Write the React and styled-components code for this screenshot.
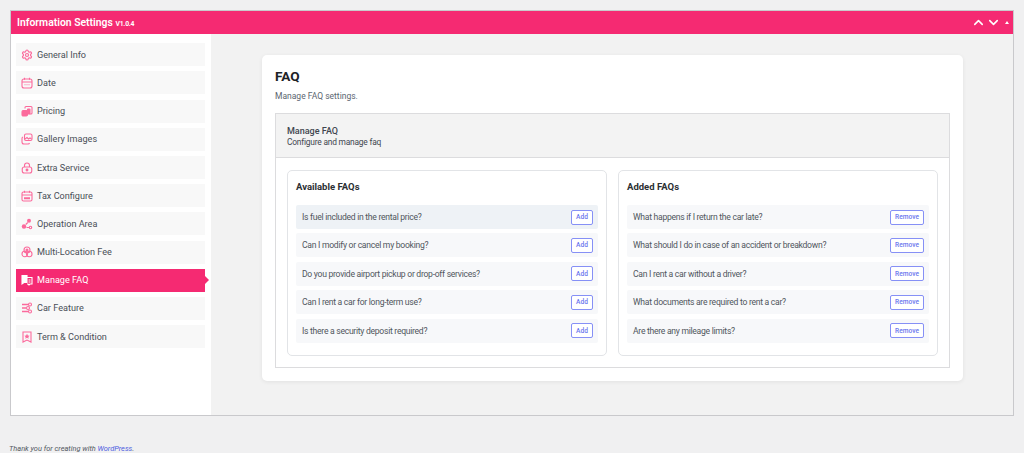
import React from "react";
import styled, { createGlobalStyle } from "styled-components";
import { Settings, ChevronUp, ChevronDown } from "lucide-react";

const GlobalStyle = createGlobalStyle`
  html, body {
    margin: 0;
    padding: 0;
    height: 453px;
    overflow: hidden;
    background: #f0f0f1;
    font-family: Roboto, "Noto Sans", "Liberation Sans", sans-serif;
  }
`;

const PINK = "#f52a72";

const Glyph = styled.svg.attrs({ viewBox: "0 0 24 24", fill: "none", stroke: "currentColor", strokeWidth: 2.2 })`
  width: 12px;
  height: 12px;
`;

const DateIcon = () => (
  <Glyph>
    <rect x="2" y="4" width="20" height="18" rx="4" />
    <path d="M7 1.5v4M17 1.5v4M2 10h20" />
    <path d="M7 15.5h10" strokeDasharray="2 2" />
  </Glyph>
);

const PricingIcon = () => (
  <Glyph>
    <rect x="2" y="11" width="11" height="11" rx="2.5" fill="currentColor" />
    <path d="M8 7V5a2 2 0 0 1 2-2h10a2 2 0 0 1 2 2v11a2 2 0 0 1-2 2h-3" />
    <rect x="13" y="8" width="5" height="10" rx="1" fill="currentColor" />
  </Glyph>
);

const GalleryIcon = () => (
  <Glyph>
    <rect x="7" y="2" width="15" height="13" rx="3" />
    <path d="M4 8a3 3 0 0 0-2 3v7a4 4 0 0 0 4 4h8a3 3 0 0 0 3-2" />
    <path d="M8 12l4-3 3 3 3-2 3 2" />
  </Glyph>
);

const ExtraIcon = () => (
  <Glyph>
    <path d="M7 10V7a5 5 0 0 1 10 0v3" />
    <rect x="2.5" y="10" width="19" height="12" rx="4" />
    <circle cx="12" cy="16" r="1.8" fill="currentColor" />
  </Glyph>
);

const TaxIcon = () => (
  <Glyph>
    <rect x="2" y="4" width="20" height="18" rx="3" />
    <path d="M7 1.5v4M17 1.5v4M2 10h20" />
    <path d="M6 16.5h12" strokeWidth="4" />
  </Glyph>
);

const AreaIcon = () => (
  <Glyph>
    <circle cx="16" cy="5.5" r="4" fill="currentColor" stroke="none" />
    <circle cx="6" cy="17" r="4.5" fill="currentColor" stroke="none" />
    <circle cx="19" cy="19" r="2.4" />
    <path d="M13.5 9l-4 4M11 19h5" />
  </Glyph>
);

const LocationIcon = () => (
  <Glyph>
    <circle cx="12" cy="8" r="6" />
    <circle cx="12" cy="8" r="2" fill="currentColor" />
    <circle cx="7.5" cy="16" r="5.5" />
    <circle cx="16.5" cy="16" r="5.5" />
  </Glyph>
);

const FaqIcon = () => (
  <Glyph>
    <path d="M2 3h10v14H6l-4 3z" fill="currentColor" />
    <path d="M12 7h10v13h-4l-2 2-2-2h-2" />
    <path d="M15 12h4M15 16h4" />
  </Glyph>
);

const FeatureIcon = () => (
  <Glyph>
    <path d="M2 5h12M2 12h8M2 19h12" strokeWidth="3" />
    <circle cx="18" cy="5" r="3" />
    <circle cx="14" cy="12" r="3" />
    <circle cx="18" cy="19" r="3" />
  </Glyph>
);

const TermIcon = () => (
  <Glyph>
    <path d="M4 2h16v20l-8-4-8 4z" />
    <path d="M12 5.5l1.7 3.3 3.6.5-2.6 2.5.6 3.6-3.3-1.7-3.3 1.7.6-3.6-2.6-2.5 3.6-.5z" fill="currentColor" stroke="none" />
  </Glyph>
);

const GeneralIcon = () => <Settings size={12} strokeWidth={2.4} />;

const menu = [
  { label: "General Info", Icon: GeneralIcon },
  { label: "Date", Icon: DateIcon },
  { label: "Pricing", Icon: PricingIcon },
  { label: "Gallery Images", Icon: GalleryIcon },
  { label: "Extra Service", Icon: ExtraIcon },
  { label: "Tax Configure", Icon: TaxIcon },
  { label: "Operation Area", Icon: AreaIcon },
  { label: "Multi-Location Fee", Icon: LocationIcon },
  { label: "Manage FAQ", Icon: FaqIcon, active: true },
  { label: "Car Feature", Icon: FeatureIcon },
  { label: "Term & Condition", Icon: TermIcon },
];

const available = [
  "Is fuel included in the rental price?",
  "Can I modify or cancel my booking?",
  "Do you provide airport pickup or drop-off services?",
  "Can I rent a car for long-term use?",
  "Is there a security deposit required?",
];

const added = [
  "What happens if I return the car late?",
  "What should I do in case of an accident or breakdown?",
  "Can I rent a car without a driver?",
  "What documents are required to rent a car?",
  "Are there any mileage limits?",
];

const Page = styled.div`
  padding: 10px 10px 0;
  width: 1024px;
  box-sizing: border-box;
`;

const Frame = styled.div`
  border: 1px solid #c9c9cc;
  height: 406px;
  box-sizing: border-box;
  display: flex;
  flex-direction: column;
  background: #f2f2f2;
`;

const TopBar = styled.div`
  height: 23px;
  flex: none;
  background: ${PINK};
  color: #fff;
  display: flex;
  align-items: center;
  justify-content: space-between;
  padding: 0 4px 0 6px;
`;

const AppTitle = styled.div`
  font-size: 10.4px;
  font-weight: 600;
  small {
    font-size: 6.8px;
    font-weight: 700;
    letter-spacing: -0.2px;
  }
`;

const TopActions = styled.div`
  display: flex;
  align-items: center;
`;

const Caret = styled.span`
  width: 0;
  height: 0;
  margin: 0 0 1px 4px;
  border-left: 2.5px solid transparent;
  border-right: 2.5px solid transparent;
  border-bottom: 3px solid #fff;
`;

const Body = styled.div`
  flex: 1;
  display: flex;
  min-height: 0;
`;

const Sidebar = styled.nav`
  width: 200px;
  flex: none;
  background: #fff;
  padding: 9.3px 6px 0 5px;
  box-sizing: border-box;
  display: flex;
  flex-direction: column;
  gap: 5.2px;
`;

const MenuItem = styled.div`
  position: relative;
  height: 23px;
  display: flex;
  align-items: center;
  gap: 4px;
  padding-left: 5px;
  font-size: 9.1px;
  background: ${(p) => (p.$active ? PINK : "#f8f8f8")};
  color: ${(p) => (p.$active ? "#fff" : "#4a4f57")};

  svg {
    color: ${(p) => (p.$active ? "#fff" : "#fb6a9c")};
    flex: none;
  }

  ${(p) =>
    p.$active &&
    `&::after {
      content: "";
      position: absolute;
      right: -4px;
      top: 7px;
      border-left: 4px solid ${PINK};
      border-top: 4px solid transparent;
      border-bottom: 4px solid transparent;
    }`}
`;

const Main = styled.main`
  flex: 1;
  padding: 21px 50px 0 51px;
  min-width: 0;
`;

const Card = styled.section`
  background: #fff;
  border-radius: 5px;
  box-shadow: 0 1px 4px rgba(0, 0, 0, 0.07);
  height: 326px;
  box-sizing: border-box;
  padding: 13px 13px 0;
`;

const Heading = styled.h1`
  margin: 0;
  font-size: 13.6px;
  line-height: 17px;
  font-weight: 700;
  color: #1d2327;
`;

const Subheading = styled.p`
  margin: 4px 0 10px;
  font-size: 8.5px;
  line-height: 14px;
  color: #5c6670;
`;

const Panel = styled.div`
  border: 1px solid #dcdcde;
  height: 255px;
  box-sizing: border-box;
`;

const PanelHead = styled.div`
  height: 44px;
  box-sizing: border-box;
  background: #f3f3f3;
  border-bottom: 1px solid #dcdcde;
  padding: 12px 11px 0;
  color: #3f4650;
  font-size: 8.4px;
  letter-spacing: -0.2px;
  line-height: 11px;

  strong {
    display: block;
    font-weight: 500;
    font-size: 9px;
    letter-spacing: 0;
  }
`;

const Columns = styled.div`
  display: grid;
  grid-template-columns: 320px 320px;
  gap: 11px;
  padding: 12px 11px 0;
`;

const ListCard = styled.div`
  height: 186px;
  box-sizing: border-box;
  border: 1px solid #e2e4e7;
  border-radius: 5px;
  padding: 10px 8px 0;
`;

const ListTitle = styled.h2`
  margin: 0 0 12px;
  font-size: 9.5px;
  line-height: 12px;
  font-weight: 700;
  color: #2b2f33;
`;

const Rows = styled.div`
  display: flex;
  flex-direction: column;
  gap: 4.4px;
`;

const Row = styled.div`
  height: 24px;
  display: flex;
  align-items: center;
  justify-content: space-between;
  padding: 0 5px 0 6px;
  border-radius: 2px;
  background: ${(p) => (p.$hover ? "#eef2f6" : "#f7f8fa")};
  font-size: 8.6px;
  letter-spacing: -0.28px;
  color: #50565d;
`;

const RowButton = styled.button`
  height: 15px;
  padding: 0 4px;
  min-width: 22px;
  box-sizing: border-box;
  border: 1px solid #8690f6;
  border-radius: 2px;
  background: #fff;
  color: #6b76ee;
  font: 500 6.6px Roboto, "Noto Sans", sans-serif;
  letter-spacing: 0;
`;

const Footer = styled.p`
  margin: 27px 0 0 -1px;
  font-size: 7.4px;
  font-style: italic;
  line-height: 12px;
  color: #50575e;

  a {
    color: #4b5be0;
    text-decoration: none;
  }
`;

const FaqList = ({ title, items, action, hoverFirst }) => (
  <ListCard>
    <ListTitle>{title}</ListTitle>
    <Rows>
      {items.map((q, i) => (
        <Row key={q} $hover={hoverFirst && i === 0}>
          {q}
          <RowButton>{action}</RowButton>
        </Row>
      ))}
    </Rows>
  </ListCard>
);

export default function App() {
  return (
    <Page>
      <GlobalStyle />
      <Frame>
        <TopBar>
          <AppTitle>
            Information Settings <small>V1.0.4</small>
          </AppTitle>
          <TopActions>
            <ChevronUp size={15} strokeWidth={2.5} />
            <ChevronDown size={15} strokeWidth={2.5} />
            <Caret />
          </TopActions>
        </TopBar>
        <Body>
          <Sidebar>
            {menu.map(({ label, Icon, active }) => (
              <MenuItem key={label} $active={active}>
                <Icon />
                {label}
              </MenuItem>
            ))}
          </Sidebar>
          <Main>
            <Card>
              <Heading>FAQ</Heading>
              <Subheading>Manage FAQ settings.</Subheading>
              <Panel>
                <PanelHead>
                  <strong>Manage FAQ</strong>
                  Configure and manage faq
                </PanelHead>
                <Columns>
                  <FaqList title="Available FAQs" items={available} action="Add" hoverFirst />
                  <FaqList title="Added FAQs" items={added} action="Remove" />
                </Columns>
              </Panel>
            </Card>
          </Main>
        </Body>
      </Frame>
      <Footer>
        Thank you for creating with <a href="#">WordPress</a>.
      </Footer>
    </Page>
  );
}
